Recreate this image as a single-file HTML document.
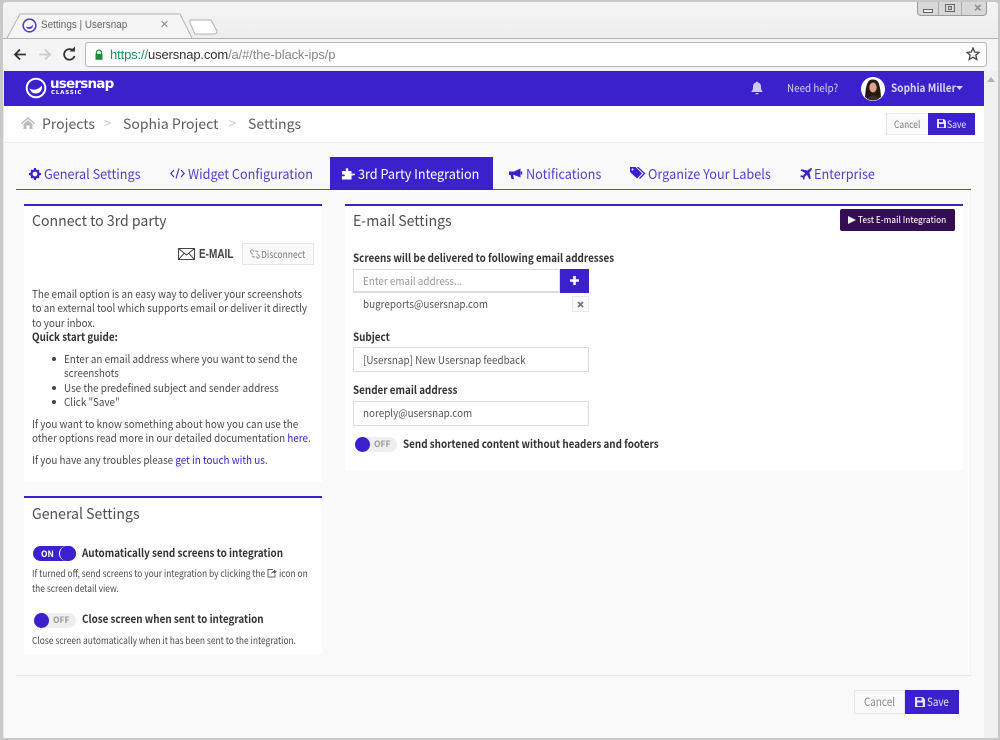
<!DOCTYPE html>
<html><head><meta charset="utf-8"><title>Settings | Usersnap</title>
<style>
html,body{margin:0;padding:0;width:1000px;height:740px;overflow:hidden;background:#c8c8c8}
*{box-sizing:border-box}
.a{position:absolute}
.t{position:absolute;white-space:nowrap;font-family:"Noto Sans CJK JP","Liberation Sans",sans-serif;line-height:16px;color:#444;transform-origin:left center}
.tab{font-size:13.5px;color:#4f3fcf;transform:scaleX(.938)}
.b{font-size:11px;color:#4a4a4a;transform:scaleX(.896)}
.h{font-size:15px;color:#505050;transform:scaleX(.94)}
.l{font-size:11px;font-weight:700;color:#333;transform:scaleX(.896)}
.s{font-size:9.5px;color:#4a4a4a;transform:scaleX(.885)}
.f{font-size:10.5px;color:#555;transform:scaleX(.94)}
svg{position:absolute;display:block}
.inp{position:absolute;background:#fff;border:1px solid #dcdcdc}
</style></head><body>
<div class="a" style="left:3px;top:2px;width:995px;height:736px;background:linear-gradient(#f4f4f4,#e8e8e8 70px);border-radius:3px 3px 0 0"></div>
<!-- tab -->
<svg style="left:3px;top:12px" width="220" height="30"><path d="M4 26 L17 2 H177 L190 28" fill="#f5f5f5" stroke="#b4b4b4"/><path d="M187 9 H208 L214 20 Q214 23 211 23 H192 L187 12Z" fill="#fff" stroke="#b0b0b0" transform="translate(0,-1)"/></svg>
<svg style="left:22px;top:18px" width="15" height="15" viewBox="0 0 15 15"><circle cx="7.5" cy="7.5" r="6.3" fill="#fff" stroke="#4f3fcf" stroke-width="1.6"/><path d="M4 8.5 Q8 10.5 11 6.5 Q11 11.5 6.5 11 Q4.5 10.5 4 8.5Z" fill="#4f3fcf"/></svg>
<div class="t" style="left:41px;top:17px;font:11px/16px 'Liberation Sans',sans-serif;color:#666;transform:scaleX(.9)">Settings | Usersnap</div>
<div class="t" style="left:160px;top:17px;font:15px/16px 'Liberation Sans',sans-serif;color:#888">×</div>
<!-- window controls -->
<div class="a" style="left:917px;top:2px;width:70px;height:14px;background:#d8d8d8;border:1px solid #9a9a9a;border-top:0;border-radius:0 0 4px 4px"></div>
<div class="a" style="left:938px;top:2px;width:1px;height:13px;background:#aaa"></div>
<div class="a" style="left:961px;top:2px;width:1px;height:13px;background:#aaa"></div>
<div class="a" style="left:923px;top:9px;width:10px;height:4px;border:1px solid #666;background:#eee"></div>
<div class="a" style="left:945px;top:4px;width:10px;height:8px;border:1px solid #666"></div>
<div class="a" style="left:948px;top:6px;width:4px;height:4px;border:1px solid #666"></div>
<div class="t" style="left:974px;top:0px;font:bold 13px/16px 'Liberation Sans',sans-serif;color:#888">×</div>
<!-- toolbar -->
<div class="a" style="left:3px;top:38px;width:995px;height:33px;background:#f4f4f4;border-top:1px solid #b4b4b4"></div>
<svg style="left:12px;top:46px" width="70" height="18" viewBox="0 0 70 18"><path d="M14 8.500 H3 M8 3.500 L3 8.500 L8 13.500" fill="none" stroke="#333" stroke-width="1.800"/><path d="M27 8.500 H38 M33 3.500 L38 8.500 L33 13.500" fill="none" stroke="#ccc" stroke-width="1.800"/><path d="M61.500 5 A5.300 5.300 0 1 0 62.500 10" fill="none" stroke="#333" stroke-width="1.800"/><path d="M57.500 5.500 H63 V0.500Z" fill="#333"/></svg>
<div class="a" style="left:85px;top:42px;width:902px;height:25px;background:#fff;border:1px solid #b8b8b8;border-radius:3px"></div>
<svg style="left:94px;top:49px" width="10" height="11" viewBox="0 0 10 11"><path d="M2.500 5 V3.500 A2.500 2.500 0 0 1 7.500 3.500 V5" fill="none" stroke="#1e8e3e" stroke-width="1.200"/><rect x="1.500" y="4.800" width="7" height="6" fill="#1e8e3e"/></svg>
<div class="t" style="left:110px;top:47px;font:13px/16px 'Liberation Sans',sans-serif;color:#888;letter-spacing:-.13px"><span style="color:#1e8e5e">https://</span><span style="color:#333">usersnap.com</span>/a/#/the-black-ips/p</div>
<svg style="left:966px;top:47px" width="14" height="14" viewBox="0 0 14 14"><path d="M7 1 L8.700 5 L13 5.400 L9.800 8.200 L10.800 12.500 L7 10.200 L3.200 12.500 L4.200 8.200 L1 5.400 L5.300 5Z" fill="none" stroke="#444" stroke-width="1.300"/></svg>
<!-- page -->
<div class="a" style="left:4px;top:71px;width:980px;height:667px;background:#f9f9f9"></div>
<div class="a" style="left:984px;top:71px;width:14px;height:667px;background:#f0f0f0"></div>
<svg style="left:987px;top:77px" width="8" height="5"><path d="M0 5 L4 0 L8 5Z" fill="#b0b0b0"/></svg>
<!-- nav -->
<div class="a" style="left:4px;top:71px;width:980px;height:35px;background:#3b21cc"></div>
<svg style="left:25px;top:77px" width="22" height="22" viewBox="0 0 22 22"><circle cx="11" cy="11" r="9.300" fill="none" stroke="#fff" stroke-width="2"/><path d="M4.500 11.500 Q11 15 17 8.500 Q17.500 16.500 10 16.500 Q6 16 4.500 11.500Z" fill="#fff"/></svg>
<div class="t" style="left:50px;top:76px;font:bold 13.500px/16px 'DejaVu Sans',sans-serif;color:#fff;letter-spacing:-.8px">usersnap</div>
<div class="t" style="left:51px;top:89px;font:bold 5.500px/8px 'DejaVu Sans',sans-serif;color:#fff;letter-spacing:.8px">CLASSIC</div>
<svg style="left:750px;top:81px" width="14" height="14" viewBox="0 0 14 14"><path d="M7 .5 A1 1 0 0 1 8 1.500 C10.500 2 11 4 11 6 C11 9 12 10 13 11 H1 C2 10 3 9 3 6 C3 4 3.500 2 6 1.500 A1 1 0 0 1 7 .5Z M5.500 12 H8.500 A1.500 1.500 0 0 1 5.500 12Z" fill="#cfc8f5"/></svg>
<div class="t" style="left:787px;top:80px;font-size:11px;color:#d5cff6;transform:scaleX(.895)">Need help?</div>
<svg style="left:861px;top:77px" width="24" height="24" viewBox="0 0 24 24"><circle cx="12" cy="12" r="12" fill="#fff"/><path d="M4 20 C5 6 7 2.500 12 2.500 C18 2.500 19 8 20 20 Q12 26 4 20Z" fill="#2a1712"/><ellipse cx="12" cy="10.500" rx="3.700" ry="5" fill="#d8a88c"/><path d="M6 22 Q12 15 18 22 Q12 25 6 22Z" fill="#39302e"/></svg>
<div class="t" style="left:891px;top:80px;font-size:11px;font-weight:700;color:#d9d4f8;transform:scaleX(.914)">Sophia Miller</div>
<svg style="left:956px;top:86px" width="7" height="4"><path d="M0 0 H7 L3.500 4Z" fill="#d9d4f8"/></svg>
<!-- breadcrumb -->
<div class="a" style="left:4px;top:106px;width:980px;height:37px;background:#fff;border-bottom:1px solid #eee"></div>
<svg style="left:21px;top:117px" width="14" height="12" viewBox="0 0 14 12"><path d="M7 0 L14 6 L13 7 L7 2 L1 7 L0 6Z M2.500 7 L7 3.200 L11.500 7 V12 H8.500 V8.500 H5.500 V12 H2.500Z" fill="#bbb"/></svg>
<div class="t" style="left:42px;top:116px;font-size:14px;color:#5c5c5c">Projects</div>
<div class="t" style="left:104px;top:115px;font-size:13px;color:#c4c4c4">&gt;</div>
<div class="t" style="left:123px;top:116px;font-size:14px;color:#5c5c5c">Sophia Project</div>
<div class="t" style="left:229px;top:115px;font-size:13px;color:#c4c4c4">&gt;</div>
<div class="t" style="left:248px;top:116px;font-size:14px;color:#5c5c5c">Settings</div>
<div class="a" style="left:886px;top:113px;width:43px;height:22px;background:#fafafa;border:1px solid #e8e8e8"></div>
<div class="t" style="left:894px;top:116px;font-size:10px;color:#777;transform:scaleX(.84)">Cancel</div>
<div class="a" style="left:928px;top:113px;width:47px;height:22px;background:#3b21cc"></div>
<svg style="left:937px;top:119px" width="9" height="9" viewBox="0 0 9 9"><path d="M0 0 H7 L9 2 V9 H0Z M2 .8 V3.200 H6 V.8Z M2 5 V8.200 H7 V5Z" fill="#e6e3fa" fill-rule="evenodd"/></svg>
<div class="t" style="left:947px;top:116px;font-size:10px;color:#e6e3fa;transform:scaleX(.86)">Save</div>
<!-- tabs -->
<div class="a" style="left:16px;top:189px;width:955px;height:1px;background:#5b4acb"></div>
<div class="a" style="left:16px;top:190px;width:955px;height:486px;background:#fafafa;border-right:1px solid #f3f3f3;border-bottom:1px solid #e8e8e8"></div>
<div class="a" style="left:330px;top:157px;width:163px;height:33px;background:#3b21cc"></div>
<svg style="left:29px;top:168px" width="12" height="12" viewBox="0 0 12 12"><circle cx="6" cy="6" r="3.600" fill="none" stroke="#3b21cc" stroke-width="2.400"/><path d="M5 0 H7 V2 H5Z M5 10 H7 V12 H5Z M0 5 H2 V7 H0Z M10 5 H12 V7 H10Z M1.500 2.800 L2.800 1.500 L4 2.700 L2.700 4Z M8 2.700 L9.200 1.500 L10.500 2.800 L9.300 4Z M1.500 9.200 L2.700 8 L4 9.300 L2.800 10.500Z M8 9.300 L9.300 8 L10.500 9.200 L9.200 10.500Z" fill="#3b21cc"/></svg>
<div class="t tab" style="left:44px;top:165px">General Settings</div>
<svg style="left:170px;top:168px" width="15" height="11" viewBox="0 0 15 11"><path d="M4 2 L.8 5.500 L4 9 M11 2 L14.200 5.500 L11 9 M9 .5 L6 10.500" fill="none" stroke="#3b21cc" stroke-width="1.100"/></svg>
<div class="t tab" style="left:188px;top:165px">Widget Configuration</div>
<svg style="left:342px;top:167px" width="14" height="13" viewBox="0 0 14 13"><path d="M0 4 H4 Q3 1.500 5 1 Q7 1.500 6 4 H9.500 V7 Q12 6 13 7 Q13.500 8.500 9.500 8.500 V12.500 H0 V9 Q2.500 10 3 8.500 Q2.500 7 0 7.500Z" fill="#fff"/></svg>
<div class="t tab" style="left:358px;top:165px;color:#fff">3rd Party Integration</div>
<svg style="left:509px;top:168px" width="14" height="12" viewBox="0 0 14 12"><path d="M0 3.500 H5 L11.500 .5 V9.500 L5 7 H4 L5 11 H2.500 L1.500 7 H0Z" fill="#3b21cc"/><path d="M12.500 3.500 V6.500" stroke="#3b21cc" stroke-width="1.500"/></svg>
<div class="t tab" style="left:526px;top:165px">Notifications</div>
<svg style="left:630px;top:167px" width="16" height="13" viewBox="0 0 16 13"><path d="M0 0 H5.500 L12 6.500 L7 11.500 L0 5Z" fill="#3b21cc"/><circle cx="2.500" cy="2.500" r="1" fill="#fafafa"/><path d="M7.500 0 L14.500 6.500 L9.500 11.500" fill="none" stroke="#3b21cc" stroke-width="1.300"/></svg>
<div class="t tab" style="left:648px;top:165px">Organize Your Labels</div>
<svg style="left:800px;top:168px" width="12" height="12" viewBox="0 0 12 12"><path d="M11.700 .3 C12.300 1 11.500 2.500 9.500 4.300 L10.700 10.500 L9.500 11.500 L7 6.800 L4.500 9 L4.700 11 L3.700 12 L2.600 9.500 L0 8.400 L1 7.400 L3 7.600 L5.200 5 L.5 2.500 L1.500 1.300 L7.700 2.500 C9.500 .5 11 -.3 11.700 .3Z" fill="#3b21cc"/></svg>
<div class="t tab" style="left:814px;top:165px">Enterprise</div>
<!-- left panel -->
<div class="a" style="left:24px;top:204px;width:298px;height:278px;background:#fff;border-top:2px solid #3b21cc"></div>
<div class="t h" style="left:32px;top:213px">Connect to 3rd party</div>
<svg style="left:178px;top:248px" width="17" height="12" viewBox="0 0 17 12"><rect x=".5" y=".5" width="16" height="11" fill="none" stroke="#444"/><path d="M.5 .5 L8.500 7 L16.500 .5 M.5 11.500 L6 5.500 M16.500 11.500 L11 5.500" fill="none" stroke="#444"/></svg>
<div class="t" style="left:199px;top:246px;font:bold 12.500px/16px 'Liberation Sans',sans-serif;color:#444;transform:scaleX(.8);transform-origin:left">E-MAIL</div>
<div class="a" style="left:242px;top:243px;width:72px;height:22px;background:#fafafa;border:1px solid #e6e6e6"></div>
<svg style="left:250px;top:249px" width="10" height="10" viewBox="0 0 10 10"><path d="M4 2.500 L2.500 1 A1.500 1.500 0 0 0 1 3.500 L3 5.500 M6 7.500 L7.500 9 A1.500 1.500 0 0 0 9 6.500 L7 4.500 M6 1 V3 M8 2 L7 3 M2 8 L3 7 M4 9 V7" fill="none" stroke="#999" stroke-width="1"/></svg>
<div class="t" style="left:261px;top:246px;font-size:9.500px;color:#777;transform:scaleX(.9)">Disconnect</div>
<div class="t b" style="left:32px;top:286px">The email option is an easy way to deliver your screenshots</div>
<div class="t b" style="left:32px;top:300px">to an external tool which supports email or deliver it directly</div>
<div class="t b" style="left:32px;top:315px">to your inbox.</div>
<div class="t b" style="left:32px;top:329px;font-weight:700;color:#333">Quick start guide:</div>
<div class="a" style="left:52px;top:357px;width:4px;height:4px;border-radius:2px;background:#444"></div>
<div class="t b" style="left:64px;top:351px">Enter an email address where you want to send the</div>
<div class="t b" style="left:64px;top:365px">screenshots</div>
<div class="a" style="left:52px;top:386px;width:4px;height:4px;border-radius:2px;background:#444"></div>
<div class="t b" style="left:64px;top:380px">Use the predefined subject and sender address</div>
<div class="a" style="left:52px;top:400px;width:4px;height:4px;border-radius:2px;background:#444"></div>
<div class="t b" style="left:64px;top:394px">Click "Save"</div>
<div class="t b" style="left:32px;top:416px">If you want to know something about how you can use the</div>
<div class="t b" style="left:32px;top:430px">other options read more in our detailed documentation <span style="color:#3b21cc">here</span>.</div>
<div class="t b" style="left:32px;top:452px">If you have any troubles please <span style="color:#3b21cc">get in touch with us</span>.</div>
<!-- general settings -->
<div class="a" style="left:24px;top:496px;width:298px;height:158px;background:#fff;border-top:2px solid #3b21cc"></div>
<div class="t h" style="left:32px;top:506px">General Settings</div>
<div class="a" style="left:33px;top:546px;width:43px;height:15px;border-radius:8px;background:#3b21cc"></div>
<div class="a" style="left:59px;top:546px;width:17px;height:15px;border-radius:8px;background:#3b21cc;border:1px solid #fff;border-top:0;border-bottom:0;border-right:0"></div>
<div class="t" style="left:41px;top:546px;font-size:8.500px;font-weight:700;color:#fff">ON</div>
<div class="t l" style="left:82px;top:545px">Automatically send screens to integration</div>
<div class="t s" style="left:32px;top:565px">If turned off, send screens to your integration by clicking the</div>
<svg style="left:267px;top:569px" width="10" height="9" viewBox="0 0 10 9"><path d="M6 .5 H1 V8 H8 V5" fill="none" stroke="#666"/><path d="M4 5 Q4.500 2 7 2 V.5 L9.800 2.800 L7 5 V3.500 Q5 3.500 4 5Z" fill="#555"/></svg>
<div class="t s" style="left:279px;top:565px">icon on</div>
<div class="t s" style="left:32px;top:580px">the screen detail view.</div>
<div class="a" style="left:34px;top:613px;width:42px;height:15px;border-radius:8px;background:#eee"></div>
<div class="a" style="left:34px;top:613px;width:15px;height:15px;border-radius:8px;background:#3b21cc"></div>
<div class="t" style="left:53px;top:612px;font-size:8.500px;font-weight:700;color:#999">OFF</div>
<div class="t l" style="left:82px;top:611px">Close screen when sent to integration</div>
<div class="t s" style="left:32px;top:632px">Close screen automatically when it has been sent to the integration.</div>
<!-- right panel -->
<div class="a" style="left:345px;top:204px;width:618px;height:266px;background:#fff;border-top:2px solid #3b21cc"></div>
<div class="t h" style="left:353px;top:213px">E-mail Settings</div>
<div class="a" style="left:840px;top:209px;width:115px;height:22px;background:#350d54;border-radius:2px"></div>
<svg style="left:848px;top:216px" width="8" height="8"><path d="M0 0 L8 4 L0 8Z" fill="#f3eef8"/></svg>
<div class="t" style="left:858px;top:212px;font-size:9px;font-weight:500;color:#f0e9f6;transform:scaleX(.91)">Test E-mail Integration</div>
<div class="t l" style="left:353px;top:250px">Screens will be delivered to following email addresses</div>
<div class="inp" style="left:353px;top:269px;width:207px;height:24px;border-bottom-width:2px"></div>
<div class="t f" style="left:363px;top:274px;color:#999">Enter email address...</div>
<div class="a" style="left:560px;top:269px;width:29px;height:24px;background:#3b21cc"></div>
<svg style="left:570px;top:276px" width="9" height="9"><path d="M3.200 0 H5.800 V3.200 H9 V5.800 H5.800 V9 H3.200 V5.800 H0 V3.200 H3.200Z" fill="#fff"/></svg>
<div class="t f" style="left:363px;top:297px">bugreports@usersnap.com</div>
<div class="a" style="left:572px;top:296px;width:17px;height:16px;background:#fafafa;border:1px solid #eaeaea"></div>
<svg style="left:577px;top:301px" width="7" height="7"><path d="M1 1 L6 6 M6 1 L1 6" stroke="#777" stroke-width="1.800"/></svg>
<div class="t l" style="left:353px;top:329px">Subject</div>
<div class="inp" style="left:353px;top:347px;width:236px;height:25px"></div>
<div class="t f" style="left:363px;top:353px">[Usersnap] New Usersnap feedback</div>
<div class="t l" style="left:353px;top:382px">Sender email address</div>
<div class="inp" style="left:353px;top:401px;width:236px;height:25px"></div>
<div class="t f" style="left:363px;top:406px">noreply@usersnap.com</div>
<div class="a" style="left:355px;top:437px;width:42px;height:15px;border-radius:8px;background:#eee"></div>
<div class="a" style="left:355px;top:437px;width:15px;height:15px;border-radius:8px;background:#3b21cc"></div>
<div class="t" style="left:374px;top:436px;font-size:8.500px;font-weight:700;color:#999">OFF</div>
<div class="t l" style="left:403px;top:436px">Send shortened content without headers and footers</div>
<!-- bottom buttons -->
<div class="a" style="left:854px;top:690px;width:51px;height:24px;background:#fafafa;border:1px solid #e6e6e6"></div>
<div class="t" style="left:864px;top:694px;font-size:11.500px;color:#888;transform:scaleX(.86)">Cancel</div>
<div class="a" style="left:905px;top:690px;width:54px;height:24px;background:#3b21cc"></div>
<svg style="left:915px;top:697px" width="10" height="10" viewBox="0 0 9 9"><path d="M0 0 H7 L9 2 V9 H0Z M2 .8 V3.200 H6 V.8Z M2 5 V8.200 H7 V5Z" fill="#e6e3fa" fill-rule="evenodd"/></svg>
<div class="t" style="left:927px;top:694px;font-size:11.500px;color:#e6e3fa;transform:scaleX(.85)">Save</div>
</body></html>
